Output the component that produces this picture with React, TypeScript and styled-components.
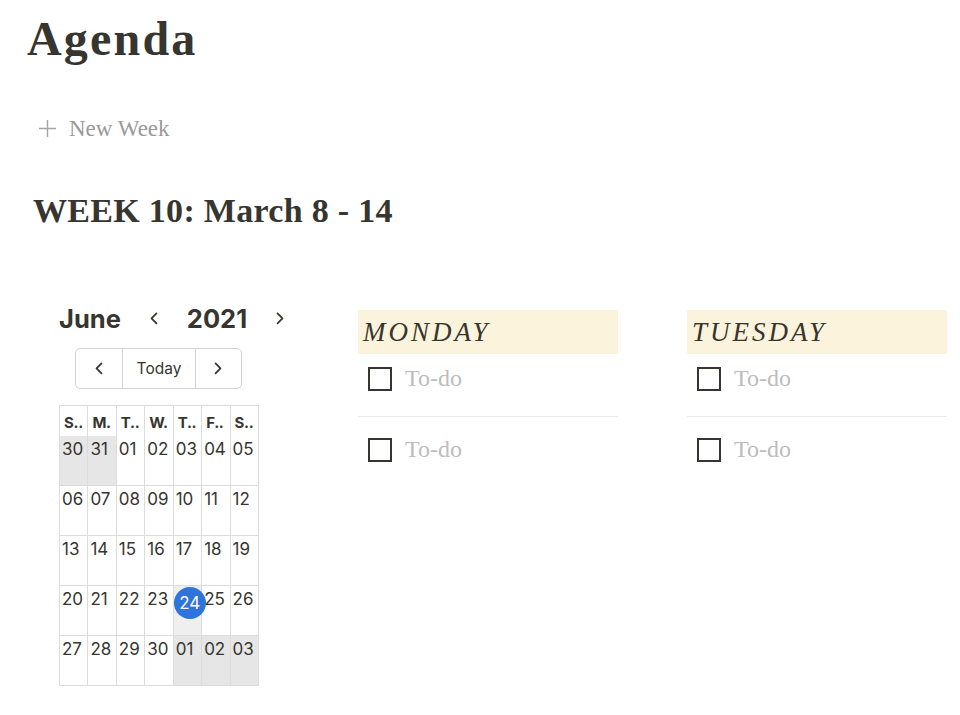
import React from "react";
import styled, { createGlobalStyle } from "styled-components";

const Global = createGlobalStyle`
  html, body { margin: 0; padding: 0; background: #ffffff; }
  body { font-family: "Liberation Serif", serif; color: #37352f; }
  * { box-sizing: border-box; }
`;

const Page = styled.div`
  width: 960px;
  min-height: 715px;
  padding-top: 10px;
`;

const Title = styled.h1`
  margin: 0;
  padding-left: 27px;
  font-family: "Liberation Serif", serif;
  font-weight: 700;
  font-size: 48px;
  line-height: 1.2;
  letter-spacing: 2.2px;
  color: #37352f;
`;

const NewWeek = styled.div`
  display: flex;
  align-items: center;
  gap: 12px;
  margin-top: 44px;
  margin-left: 38px;
  font-family: "Liberation Serif", serif;
  font-size: 23px;
  line-height: 1.5;
  color: #9b9a97;
`;

const WeekHeading = styled.h2`
  margin: 45px 0 0;
  padding-left: 33px;
  font-family: "Liberation Serif", serif;
  font-weight: 700;
  font-size: 34px;
  line-height: 1.2;
  letter-spacing: 0.3px;
  color: #37352f;
`;

const Board = styled.div`
  display: grid;
  grid-template-columns: 230px 260px 260px;
  column-gap: 69px;
  padding-left: 59px;
  margin-top: 71px;
  align-items: start;
`;

const CalendarCol = styled.div`
  display: flex;
  flex-direction: column;
  font-family: Inter, "Liberation Sans", sans-serif;
`;

const CalHeader = styled.div`
  display: flex;
  align-items: center;
  gap: 29px;
  height: 32px;
  white-space: nowrap;
`;

const CalLabel = styled.span`
  font-weight: 700;
  font-size: 25.5px;
  line-height: 32px;
  color: #37352f;
`;

const Chevron = styled.svg<{ $size?: number }>`
  display: block;
  width: ${(p) => (p.$size ?? 8)}px;
  height: ${(p) => (p.$size ?? 8) * 1.6}px;
  flex: none;
`;

const TodayGroup = styled.div`
  display: flex;
  width: 167px;
  height: 41px;
  margin: 13px 0 0 16px;
  border: 1px solid #d3d3d3;
  border-radius: 5px;
  overflow: hidden;
`;

const GroupButton = styled.div<{ $wide?: boolean }>`
  display: flex;
  align-items: center;
  justify-content: center;
  width: ${(p) => (p.$wide ? 73 : 47)}px;
  height: 100%;
  font-size: 15.5px;
  color: #37352f;
  & + & { border-left: 1px solid #d3d3d3; }
`;

const Grid = styled.div`
  display: grid;
  grid-template-columns: repeat(7, 1fr);
  width: 200px;
  margin-top: 16px;
  border-top: 1px solid #dcdcdc;
  border-left: 1px solid #dcdcdc;
`;

const HeadCell = styled.div`
  height: 30px;
  padding: 8px 0 0 4px;
  font-weight: 700;
  font-size: 15px;
  line-height: 18px;
  letter-spacing: -0.3px;
  color: #37352f;
  white-space: nowrap;
  border-right: 1px solid #dcdcdc;
`;

const DayCell = styled.div<{ $tone?: "out" | "today" }>`
  position: relative;
  height: 50px;
  padding: 3px 0 0 2px;
  font-size: 17px;
  line-height: 20px;
  color: #37352f;
  white-space: nowrap;
  border-right: 1px solid #dcdcdc;
  border-bottom: 1px solid #dcdcdc;
  background: ${(p) =>
    p.$tone === "out" ? "#e6e6e6" : p.$tone === "today" ? "#efefef" : "#ffffff"};
`;

const TodayBadge = styled.span`
  position: absolute;
  left: 0px;
  top: 1px;
  z-index: 1;
  width: 32px;
  height: 32px;
  border-radius: 50%;
  background: #2f74dc;
  color: #ffffff;
  display: flex;
  align-items: center;
  justify-content: center;
  font-size: 17px;
`;

const DayCol = styled.div`
  margin-top: 7px;
  display: flex;
  flex-direction: column;
`;

const DayHeader = styled.div`
  height: 44px;
  padding-left: 5px;
  background: #fbf3db;
  font-family: "Liberation Serif", serif;
  font-style: italic;
  font-size: 27px;
  line-height: 44px;
  letter-spacing: 3px;
  color: #37352f;
`;

const Todo = styled.div<{ $first?: boolean }>`
  display: flex;
  align-items: center;
  gap: 13px;
  height: 24px;
  margin-top: ${(p) => (p.$first ? 13 : 21)}px;
  padding-left: 10px;
`;

const Box = styled.span`
  width: 24px;
  height: 24px;
  border: 2.5px solid #37352f;
  flex: none;
`;

const TodoText = styled.span`
  font-family: "Liberation Serif", serif;
  font-size: 24px;
  color: #bebdbb;
`;

const Divider = styled.div`
  height: 1px;
  margin-top: 25px;
  background: #ebebea;
`;

const ChevronLeft = ({ size = 8 }: { size?: number }) => (
  <Chevron $size={size} viewBox="0 0 8 13">
    <polyline points="6.5,1.5 1.5,6.5 6.5,11.5" fill="none" stroke="#37352f" strokeWidth="1.8" strokeLinecap="round" strokeLinejoin="round" />
  </Chevron>
);

const ChevronRight = ({ size = 8 }: { size?: number }) => (
  <Chevron $size={size} viewBox="0 0 8 13">
    <polyline points="1.5,1.5 6.5,6.5 1.5,11.5" fill="none" stroke="#37352f" strokeWidth="1.8" strokeLinecap="round" strokeLinejoin="round" />
  </Chevron>
);

const PlusIcon = () => (
  <svg width="19" height="19" viewBox="0 0 19 19" style={{ display: "block" }}>
    <path d="M9.5 1 V18 M1 9.5 H18" stroke="#a5a4a1" strokeWidth="1.4" fill="none" />
  </svg>
);

const heads = ["S..", "M.", "T..", "W.", "T..", "F..", "S.."];

type Day = { n: string; tone?: "out" | "today" };
const weeks: Day[][] = [
  [{ n: "30", tone: "out" }, { n: "31", tone: "out" }, { n: "01" }, { n: "02" }, { n: "03" }, { n: "04" }, { n: "05" }],
  ["06", "07", "08", "09", "10", "11", "12"].map((n) => ({ n })),
  ["13", "14", "15", "16", "17", "18", "19"].map((n) => ({ n })),
  [{ n: "20" }, { n: "21" }, { n: "22" }, { n: "23" }, { n: "24", tone: "today" }, { n: "25" }, { n: "26" }],
  [{ n: "27" }, { n: "28" }, { n: "29" }, { n: "30" }, { n: "01", tone: "out" }, { n: "02", tone: "out" }, { n: "03", tone: "out" }],
];

const DayColumn = ({ name }: { name: string }) => (
  <DayCol>
    <DayHeader>{name}</DayHeader>
    <Todo $first>
      <Box />
      <TodoText>To-do</TodoText>
    </Todo>
    <Divider />
    <Todo>
      <Box />
      <TodoText>To-do</TodoText>
    </Todo>
  </DayCol>
);

export default function App() {
  return (
    <Page>
      <Global />
      <Title>Agenda</Title>
      <NewWeek>
        <PlusIcon />
        <span>New Week</span>
      </NewWeek>
      <WeekHeading>WEEK 10: March 8 - 14</WeekHeading>
      <Board>
        <CalendarCol>
          <CalHeader>
            <CalLabel>June</CalLabel>
            <ChevronLeft />
            <CalLabel>2021</CalLabel>
            <ChevronRight />
          </CalHeader>
          <TodayGroup>
            <GroupButton><ChevronLeft /></GroupButton>
            <GroupButton $wide>Today</GroupButton>
            <GroupButton><ChevronRight /></GroupButton>
          </TodayGroup>
          <Grid>
            {heads.map((h, i) => (
              <HeadCell key={i}>{h}</HeadCell>
            ))}
            {weeks.flat().map((d, i) => (
              <DayCell key={i} $tone={d.tone}>
                {d.tone === "today" ? <TodayBadge>{d.n}</TodayBadge> : d.n}
              </DayCell>
            ))}
          </Grid>
        </CalendarCol>
        <DayColumn name="MONDAY" />
        <DayColumn name="TUESDAY" />
      </Board>
    </Page>
  );
}
